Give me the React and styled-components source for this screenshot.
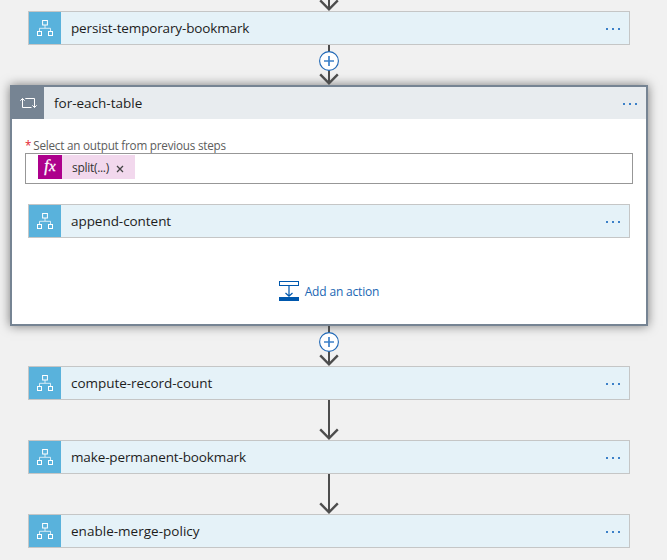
import React from "react";
import styled, { createGlobalStyle } from "styled-components";

const GlobalStyle = createGlobalStyle`
  * { box-sizing: border-box; }
  html, body { margin: 0; background: #f1f1f1; overflow: hidden; }
  body { font-family: "Open Sans", "Noto Sans", sans-serif; color: #1d1d1d; }
`;

const Canvas = styled.main`
  width: 658px;
  height: 560px;
  display: flex;
  flex-direction: column;
  align-items: center;
`;

const Link = styled.svg`
  display: block;
  flex: none;
  z-index: 1;
`;

const Card = styled.section`
  flex: none;
  display: flex;
  width: 602px;
  height: 34px;
  border: 1px solid #c5c6c6;
  background: #e5f2f8;
`;

const IconTile = styled.div`
  flex: none;
  width: 32px;
  height: 32px;
  background: ${(p) => p.$color};
  svg { display: block; }
`;

const Title = styled.span`
  flex: 1;
  padding-left: 10px;
  font-size: 13.5px;
  line-height: 32px;
  white-space: nowrap;
  letter-spacing: ${(p) => p.$spacing || 0}px;
`;

const Dots = styled.div`
  display: flex;
  gap: 4px;
  align-items: center;
  padding: 2px 9px 0 0;
  i { width: 2px; height: 2px; background: #3c80c8; }
`;

const Loop = styled.section`
  flex: none;
  width: 638px;
  height: 241px;
  border: 2px solid #768493;
  background: #fff;
  box-shadow: 0 0 10px rgba(0, 0, 0, 0.5);
`;

const LoopHeader = styled.header`
  display: flex;
  height: 32px;
  background: #e8ecef;
`;

const LoopBody = styled.div`
  display: flex;
  flex-direction: column;
  align-items: center;
  padding: 18px 13px 0;
`;

const Label = styled.label`
  align-self: stretch;
  height: 16px;
  font-size: 11.7px;
  line-height: 17px;
  color: #5c5c5c;
  letter-spacing: -0.22px;
  b { color: #e3242f; font-weight: 400; margin-right: 2px; }
`;

const Field = styled.div`
  align-self: stretch;
  height: 31px;
  margin-bottom: 20px;
  padding: 1px 0 0 12px;
  border: 1px solid #979797;
`;

const Token = styled.div`
  display: flex;
  width: 97px;
  height: 24px;
  background: #f2d8ed;
  font-size: 12px;
  line-height: 26px;
  letter-spacing: -0.3px;
  color: #333;
  svg { display: block; margin: 10px 0 0 7px; }
`;

const Fx = styled.span`
  width: 24px;
  margin-right: 10px;
  background: #ad008c;
  color: #fff;
  text-align: center;
  font: italic 16px/22px "Liberation Serif", serif;
  letter-spacing: 0.3px;
  -webkit-text-stroke: 0.3px #fff;
  small { font-size: 15px; }
`;

const AddAction = styled.button`
  display: flex;
  align-items: center;
  gap: 6px;
  height: 20px;
  margin-top: 43px;
  padding: 0;
  border: 0;
  background: none;
  font: 12px/20px "Open Sans", sans-serif;
  letter-spacing: -0.17px;
  color: #1a66b3;
  white-space: nowrap;
  span { padding-top: 2px; }
`;

function Connector({ height, plus }) {
  const cy = 16;
  return (
    <Link width="20" height={height} viewBox={`0 0 20 ${height}`} fill="none">
      <path d={`M10 0V${height - 2}`} stroke="#4d4d4d" strokeWidth="2" />
      <path
        d={`M1.2 ${height - 10.6}L10 ${height - 1.7}L18.8 ${height - 10.6}`}
        stroke="#4d4d4d"
        strokeWidth="2.4"
      />
      {plus && (
        <>
          <circle cx="10" cy={cy} r="9.4" fill="#fff" stroke="#1d66b5" strokeWidth="1.1" />
          <path d={`M5 ${cy}H15M10 ${cy - 5}V${cy + 5}`} stroke="#3c80c8" strokeWidth="1.7" />
        </>
      )}
    </Link>
  );
}

function FlowIcon() {
  return (
    <svg width="32" height="32" fill="none" stroke="#fff">
      <rect x="13.6" y="8.5" width="4.8" height="4.5" />
      <rect x="8.5" y="19.5" width="4" height="4" />
      <rect x="19.5" y="19.5" width="4" height="4" />
      <path d="M16 13V16M10.5 19V16.3H21.5V19" opacity=".75" />
    </svg>
  );
}

function LoopIcon() {
  return (
    <svg width="32" height="32" fill="none" stroke="#fff">
      <path d="M10.5 11.5V20.5H19.5M8.3 13.7L10.5 11.5L12.7 13.7M13.3 11.5H22.5V20.5M20.3 18.3L22.5 20.5L24.7 18.3" />
    </svg>
  );
}

function Action({ name, spacing }) {
  return (
    <Card>
      <IconTile $color="#59b2dc"><FlowIcon /></IconTile>
      <Title $spacing={spacing}>{name}</Title>
      <Dots><i /><i /><i /></Dots>
    </Card>
  );
}

export default function App() {
  return (
    <>
      <GlobalStyle />
      <Canvas>
        <Connector height={11} />
        <Action name="persist-temporary-bookmark" spacing={-0.14} />
        <Connector height={40} plus />
        <Loop>
          <LoopHeader>
            <IconTile $color="#768493"><LoopIcon /></IconTile>
            <Title>for-each-table</Title>
            <Dots><i /><i /><i /></Dots>
          </LoopHeader>
          <LoopBody>
            <Label><b>*</b>Select an output from previous steps</Label>
            <Field>
              <Token>
                <Fx>f<small>x</small></Fx>
                split(...)
                <svg width="8" height="8" stroke="#444" strokeWidth="1.3"><path d="M1 1L7 7M7 1L1 7" /></svg>
              </Token>
            </Field>
            <Action name="append-content" spacing={-0.05} />
            <AddAction>
              <svg width="20" height="20" fill="none" stroke="#0058ad">
                <rect x=".5" y=".5" width="19" height="4" />
                <path d="M10 5V15M6.5 12L10 15.3L13.5 12" strokeWidth="1.2" />
                <path d="M0 18H20" strokeWidth="4" />
              </svg>
              <span>Add an action</span>
            </AddAction>
          </LoopBody>
        </Loop>
        <Connector height={40} plus />
        <Action name="compute-record-count" spacing={-0.04} />
        <Connector height={40} />
        <Action name="make-permanent-bookmark" spacing={-0.13} />
        <Connector height={40} />
        <Action name="enable-merge-policy" spacing={0.02} />
      </Canvas>
    </>
  );
}
